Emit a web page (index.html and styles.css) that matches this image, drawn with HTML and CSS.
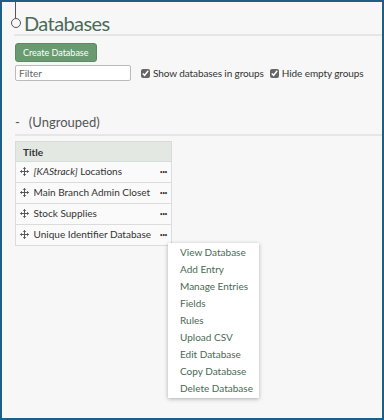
FILE: index.html
```html
<html>

<head>
    <link rel="stylesheet" href="styles.css">
</head>

<body>
    <div class="frame">
        <div class="page-head">
            <span class="timeline-dot"></span>
            <h1>Databases</h1>
        </div>

        <div class="toolbar">
            <button class="btn-create">Create Database</button>
            <div class="filters">
                <input class="filter-input" type="text" placeholder="Filter">
                <label class="check"><input type="checkbox" checked> Show databases in groups</label>
                <label class="check"><input type="checkbox" checked> Hide empty groups</label>
            </div>
        </div>

        <h2 class="group-title"><span class="toggle">-</span>(Ungrouped)</h2>

        <div class="table-wrap">
            <table class="db-table">
                <thead>
                    <tr>
                        <th>Title</th>
                    </tr>
                </thead>
                <tbody>
                    <tr>
                        <td>
                            <svg class="move" viewBox="0 0 10 10"><path d="M5 0.5V9.5M0.5 5H9.5M3.5 2L5 0.5L6.5 2M3.5 8L5 9.5L6.5 8M2 3.5L0.5 5L2 6.5M8 3.5L9.5 5L8 6.5"/></svg>
                            <span class="name"><em>[KAStrack]</em> Locations</span><span class="more">&bull;&bull;&bull;</span>
                        </td>
                    </tr>
                    <tr>
                        <td>
                            <svg class="move" viewBox="0 0 10 10"><path d="M5 0.5V9.5M0.5 5H9.5M3.5 2L5 0.5L6.5 2M3.5 8L5 9.5L6.5 8M2 3.5L0.5 5L2 6.5M8 3.5L9.5 5L8 6.5"/></svg>
                            <span class="name">Main Branch Admin Closet</span><span class="more">&bull;&bull;&bull;</span>
                        </td>
                    </tr>
                    <tr>
                        <td>
                            <svg class="move" viewBox="0 0 10 10"><path d="M5 0.5V9.5M0.5 5H9.5M3.5 2L5 0.5L6.5 2M3.5 8L5 9.5L6.5 8M2 3.5L0.5 5L2 6.5M8 3.5L9.5 5L8 6.5"/></svg>
                            <span class="name">Stock Supplies</span><span class="more">&bull;&bull;&bull;</span>
                        </td>
                    </tr>
                    <tr>
                        <td>
                            <svg class="move" viewBox="0 0 10 10"><path d="M5 0.5V9.5M0.5 5H9.5M3.5 2L5 0.5L6.5 2M3.5 8L5 9.5L6.5 8M2 3.5L0.5 5L2 6.5M8 3.5L9.5 5L8 6.5"/></svg>
                            <span class="name">Unique Identifier Database</span><span class="more">&bull;&bull;&bull;</span>
                        </td>
                    </tr>
                </tbody>
            </table>

            <ul class="db-menu">
                <li><a href="#">View Database</a></li>
                <li><a href="#">Add Entry</a></li>
                <li><a href="#">Manage Entries</a></li>
                <li><a href="#">Fields</a></li>
                <li><a href="#">Rules</a></li>
                <li><a href="#">Upload CSV</a></li>
                <li><a href="#">Edit Database</a></li>
                <li><a href="#">Copy Database</a></li>
                <li><a href="#">Delete Database</a></li>
            </ul>
        </div>
    </div>
</body>

</html>
```

FILE: styles.css
```css
* {
    box-sizing: border-box;
}

body {
    margin: 0;
    font-family: 'Lato', 'Open Sans', sans-serif;
    color: #333;
}

.frame {
    position: relative;
    width: 384px;
    height: 420px;
    overflow: hidden;
    background: #f7f7f7;
    border: 2px solid #1f5f85;
    padding: 0 0 0 12px;
}

.page-head {
    position: relative;
    display: flex;
    align-items: flex-end;
    height: 34px;
    border-bottom: 2px solid #e6e6e6;
}

.page-head::before {
    content: '';
    position: absolute;
    left: 1px;
    top: 0;
    height: 16px;
    border-left: 1px solid #555;
}

.timeline-dot {
    position: absolute;
    left: -3px;
    top: 16px;
    width: 10px;
    height: 10px;
    border: 1px solid #555;
    border-radius: 50%;
    background: #f7f7f7;
}

h1 {
    margin: 0 0 1px 10px;
    font-size: 20px;
    letter-spacing: -0.6px;
    font-weight: normal;
    color: #4b6b57;
    line-height: 1;
}

.toolbar {
    padding: 7px 0 0 1px;
}

.btn-create {
    display: block;
    height: 19px;
    padding: 0 7px;
    background: #6a9a70;
    color: #fff;
    border: 1px solid #5d8a63;
    border-radius: 3px;
    font-family: inherit;
    font-size: 9px;
}

.filters {
    display: flex;
    align-items: center;
    margin-top: 3px;
}

.filter-input {
    width: 116px;
    height: 16px;
    margin-right: 10px;
    padding: 0 3px;
    border: 1px solid #bbb;
    border-radius: 2px;
    background: #fff;
    font-family: inherit;
    font-size: 10px;
}

.filter-input::placeholder {
    color: #666;
}

.check {
    display: flex;
    align-items: center;
    margin-right: 6px;
    font-size: 10px;
    letter-spacing: -0.1px;
    color: #333;
}

.check input {
    width: 9px;
    height: 9px;
    margin: 0 3px 0 0;
    accent-color: #666;
}

.group-title {
    margin: 33px 0 0 1px;
    padding-bottom: 4px;
    border-bottom: 2px solid #e6e6e6;
    font-size: 13px;
    font-weight: normal;
    color: #555;
}

.toggle {
    margin-right: 9px;
}

.table-wrap {
    position: relative;
    margin: 5px 0 0 1px;
}

.db-table {
    border-collapse: collapse;
    width: 157px;
    font-size: 10px;
}

.db-table th {
    height: 20px;
    padding: 0 7px;
    text-align: left;
    background: #e3e8e3;
    border: 1px solid #d8dcd8;
    color: #333;
}

.db-table td {
    height: 21px;
    padding: 0 4px;
    background: #fafafa;
    border: 1px solid #dcdcdc;
    white-space: nowrap;
}

.move {
    width: 9px;
    height: 9px;
    margin-right: 2px;
    vertical-align: -1px;
    fill: none;
    stroke: #555;
    stroke-width: 1.1;
}

.more {
    float: right;
    font-size: 5px;
    line-height: 14px;
    color: #333;
    letter-spacing: -0.5px;
}

.db-menu {
    position: absolute;
    left: 153px;
    top: 102px;
    width: 91px;
    margin: 0;
    padding: 1px 0;
    list-style: none;
    background: #fff;
    box-shadow: 0 1px 4px rgba(0, 0, 0, .3);
}

.db-menu a {
    display: block;
    padding: 3px 0 3px 12px;
    font-size: 10px;
    line-height: 11px;
    white-space: nowrap;
    color: #4a6a55;
    text-decoration: none;
}
```
